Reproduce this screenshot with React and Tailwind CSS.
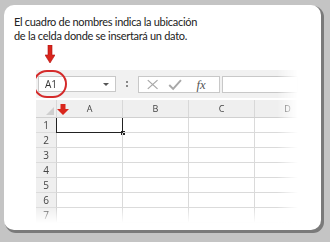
import React from "react";

const cols = ["A", "B", "C", "D"];
const rows = [1, 2, 3, 4, 5, 6, 7];

function DownArrow({ className }) {
  return (
    <svg className={className} viewBox="0 0 10 18" width="10" height="18">
      <path d="M3 0 H7 V10 H10 L5 18 L0 10 H3 Z" fill="#d9261c" stroke="#b01010" strokeWidth="0.6" />
    </svg>
  );
}

export default function App() {
  return (
    <div className="w-[330px] h-[242px] bg-[#c4c4c4] pt-[5px] pl-[4px] overflow-hidden">
      <div className="relative w-[317px] h-[225px] bg-white rounded-[10px] shadow-[2px_2px_0_1px_#7a7a7a] pt-[10px] pl-[10px]">
        <p className="font-['Lato'] text-[11px] leading-[14px] tracking-[-0.3px] text-[#222]">
          El cuadro de nombres indica la ubicación
          <br />
          de la celda donde se insertará un dato.
        </p>
        <DownArrow className="ml-[31px] mt-[2px]" />
        <div className="ml-[22px] mt-[7px] w-[262px] overflow-hidden [mask-image:linear-gradient(to_right,black_92%,transparent)]">
          {/* toolbar */}
          <div className="h-[28px] bg-[#f1f1f1] flex items-center pl-[2px] font-['Open_Sans'] text-[10px] text-[#333]">
            <div className="relative shrink-0 w-[78px] h-[16px] bg-white border border-[#c8c8c8] flex items-center justify-between pl-[6px] pr-[6px]">
              <span>A1</span>
              <span className="w-0 h-0 border-l-[3px] border-r-[3px] border-t-[3px] border-l-transparent border-r-transparent border-t-[#555]" />
              <div className="absolute left-[-6px] top-[-7px] w-[34px] h-[28px] rounded-full border-[2px] border-[#d42a2a]" />
            </div>
            <div className="shrink-0 w-[22px] flex flex-col items-center gap-[2px]">
              <span className="w-[2px] h-[2px] bg-[#888]" />
              <span className="w-[2px] h-[2px] bg-[#888]" />
            </div>
            <div className="shrink-0 w-[82px] h-[17px] bg-white border border-[#c8c8c8] flex items-center">
              <svg width="82" height="15" viewBox="0 0 82 15">
                <path d="M9 3 L19 12 M19 3 L9 12" stroke="#a8a8a8" strokeWidth="1.3" fill="none" />
                <path d="M31 8 L35 12 L43 3" stroke="#a8a8a8" strokeWidth="2" fill="none" />
                <text x="59" y="12" fontFamily="Liberation Serif" fontStyle="italic" fontSize="13" fill="#555">fx</text>
              </svg>
            </div>
            <div className="ml-[2px] flex-1 h-[17px] bg-white border border-[#c8c8c8]" />
          </div>
          {/* grid */}
          <div className="mt-[2px] font-['Open_Sans'] text-[9px] text-[#444]">
            <div className="flex h-[18px] bg-[#efefef] border-b border-[#d0d0d0]">
              <div className="relative shrink-0 w-[21px] border-r border-[#d8d8d8]">
                <svg className="absolute right-[2px] bottom-[2px]" width="8" height="8" viewBox="0 0 8 8">
                  <path d="M8 0 L8 8 L0 8 Z" fill="#cfcfcf" />
                </svg>
              </div>
              {cols.map((c) => (
                <div key={c} className="relative w-[66px] shrink-0 border-r border-[#d8d8d8] flex items-center justify-center">
                  {c}
                  {c === "A" && (
                    <svg className="absolute left-[0px] top-[4px]" width="12" height="11" viewBox="0 0 12 11">
                      <path d="M3.5 0 H8.5 V5 H12 L6 11 L0 5 H3.5 Z" fill="#d9261c" />
                    </svg>
                  )}
                </div>
              ))}
            </div>
            <div className="[mask-image:linear-gradient(to_bottom,black_85%,transparent)]">
              {rows.map((r) => (
                <div key={r} className="flex h-[15px]">
                  <div className="shrink-0 w-[21px] bg-[#efefef] border-r border-[#d0d0d0] border-b border-b-[#dcdcdc] flex items-center justify-center text-[10px]">
                    {r}
                  </div>
                  {cols.map((c) => (
                    <div key={c} className="relative w-[66px] shrink-0 border-r border-b border-[#dadada]">
                      {r === 1 && c === "A" && (
                        <div className="absolute left-[-1px] top-[-1px] w-[67px] h-[16px] border border-[#222]">
                          <div className="absolute right-[-3px] bottom-[-3px] w-[4px] h-[4px] bg-[#222]" />
                        </div>
                      )}
                    </div>
                  ))}
                </div>
              ))}
            </div>
          </div>
        </div>
      </div>
    </div>
  );
}
